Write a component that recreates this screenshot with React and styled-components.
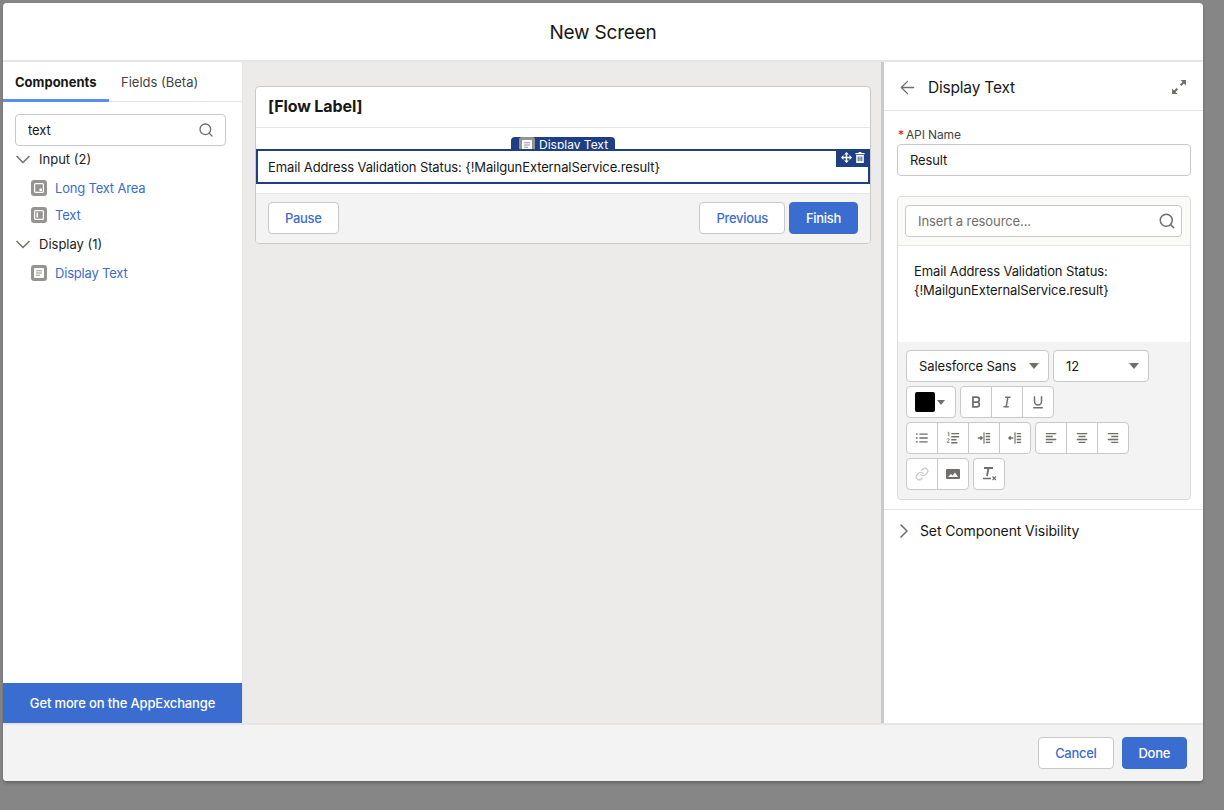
import React from 'react'
import styled, { createGlobalStyle } from 'styled-components'
import { ArrowLeft, Link, Search } from 'lucide-react'

const GlobalStyle = createGlobalStyle`
  html, body {
    margin: 0;
    height: 100%;
    overflow: hidden;
    background: #868686;
  }
  * { box-sizing: border-box; }
  body {
    font-family: Inter, "Liberation Sans", sans-serif;
    font-size: 13px;
    letter-spacing: -0.11px;
    color: #181818;
  }
`

const Page = styled.div`
  width: 1224px;
  height: 810px;
  padding: 3px 21px 29px 3px;
`

const Modal = styled.div`
  height: 778px;
  display: flex;
  flex-direction: column;
  background: #fff;
  border-radius: 4px;
  box-shadow: 0 2px 3px rgba(0, 0, 0, 0.25);
  overflow: hidden;
`

const ModalHeader = styled.header`
  height: 59px;
  flex: none;
  display: flex;
  align-items: center;
  justify-content: center;
  border-bottom: 2px solid #e5e5e5;
  font-size: 19px;
  letter-spacing: -0.2px;
  padding-top: 1px;
`

const ModalBody = styled.div`
  flex: 1;
  min-height: 0;
  display: flex;
`

const ModalFooter = styled.footer`
  height: 58px;
  flex: none;
  display: flex;
  align-items: center;
  justify-content: flex-end;
  gap: 8px;
  padding: 0 16px;
  background: #f3f3f3;
  border-top: 2px solid #e5e5e5;
`

const Button = styled.button`
  height: 32px;
  padding: 0 16px;
  border-radius: 4px;
  font: 500 13px Inter, "Liberation Sans", sans-serif;
  letter-spacing: -0.3px;
  border: 1px solid ${p => (p.$brand ? '#3b6dd0' : '#c9c9c9')};
  background: ${p => (p.$brand ? '#3b6dd0' : '#fff')};
  color: ${p => (p.$brand ? '#fff' : '#3b6dd0')};
`

const Sidebar = styled.aside`
  width: 240px;
  flex: none;
  display: flex;
  flex-direction: column;
  border-right: 1px solid #e5e5e5;
`

const Tabs = styled.div`
  height: 40px;
  flex: none;
  display: flex;
  border-bottom: 1px solid #e5e5e5;
`

const Tab = styled.div`
  height: 40px;
  display: flex;
  align-items: center;
  padding: 2px 12px 0;
  letter-spacing: 0;
  font-weight: ${p => (p.$active ? 700 : 400)};
  color: ${p => (p.$active ? '#181818' : '#444')};
  border-bottom: 3px solid ${p => (p.$active ? '#5b8def' : 'transparent')};
  ${p => p.$active && 'width: 106px;'}
`

const SidebarContent = styled.div`
  flex: 1;
  padding: 12px 16px 0 12px;
`

const SearchBox = styled.div`
  height: 32px;
  display: flex;
  align-items: center;
  justify-content: space-between;
  padding: 0 ${p => p.$right || 12}px 0 12px;
  background: #fff;
  border: 1px solid #c9c9c9;
  border-radius: 4px;
  color: ${p => (p.$muted ? '#706e6b' : '#181818')};
`

const Group = styled.div`
  height: ${p => (p.$first ? 26 : 31)}px;
  margin-bottom: ${p => (p.$first ? 2 : 0)}px;
  display: flex;
  align-items: center;
  gap: 8px;
  letter-spacing: 0;
  color: #222;
`

const Item = styled.a`
  height: 27px;
  display: flex;
  align-items: center;
  gap: 8px;
  padding-left: 16px;
  letter-spacing: -0.2px;
  color: #3b6dd0;
`

const ItemIcon = styled.span`
  width: 16px;
  height: 16px;
  flex: none;
  display: flex;
  align-items: center;
  justify-content: center;
  background: #969492;
  border-radius: 3px;
`

const ExchangeBar = styled.div`
  height: 40px;
  flex: none;
  display: flex;
  align-items: center;
  justify-content: center;
  background: #3b6dd0;
  color: #fff;
  font-weight: 500;
  letter-spacing: -0.15px;
`

const Canvas = styled.main`
  flex: 1;
  min-width: 0;
  padding: 24px 10px 0 12px;
  background: #ecebea;
`

const Card = styled.section`
  height: 158px;
  display: flex;
  flex-direction: column;
  background: #fff;
  border: 1px solid #c9c9c9;
  border-radius: 4px;
  overflow: hidden;
`

const CardTitle = styled.h2`
  height: 41px;
  flex: none;
  margin: 0;
  display: flex;
  align-items: center;
  padding: 0 12px 2px;
  font-size: 16px;
  font-weight: 700;
  border-bottom: 1px solid #e5e5e5;
`

const CardBody = styled.div`
  height: 66px;
  flex: none;
  padding-top: 21px;
  border-bottom: 1px solid #e5e5e5;
`

const Selected = styled.div`
  position: relative;
  height: 35px;
  display: flex;
  align-items: center;
  padding: 0 10px;
  border: 2px solid #1e3f84;
`

const SelectedTab = styled.div`
  position: absolute;
  top: -14px;
  left: 253px;
  width: 104px;
  height: 12px;
  overflow: hidden;
  display: flex;
  align-items: flex-start;
  gap: 4px;
  padding-left: 8px;
  background: #1e3f84;
  border-radius: 4px 4px 0 0;
  color: #fff;
  font-size: 12px;
  letter-spacing: 0;
  line-height: 15px;
`

const SelectedActions = styled.div`
  position: absolute;
  top: -2px;
  right: -2px;
  width: 34px;
  height: 18px;
  display: flex;
  align-items: center;
  justify-content: center;
  gap: 3px;
  padding-bottom: 1px;
  background: #1e3f84;
`

const CardFooter = styled.div`
  flex: 1;
  display: flex;
  align-items: center;
  padding: 0 12px 1px;
  gap: 4px;
  background: #f3f3f3;
`

const Spacer = styled.div`
  flex: 1;
`

const Panel = styled.aside`
  width: 322px;
  flex: none;
  display: flex;
  flex-direction: column;
  background: #fff;
  border-left: 3px solid #c9c9c9;
`

const PanelHeader = styled.div`
  height: 49px;
  flex: none;
  display: flex;
  align-items: center;
  gap: 10px;
  padding: 2px 17px 0 13px;
  border-bottom: 1px solid #e5e5e5;
  font-size: 15.5px;
  letter-spacing: -0.2px;
  svg { color: #706e6b; flex: none; }
`

const ExpandButton = styled.span`
  margin-left: auto;
  display: flex;
`

const PanelBody = styled.div`
  padding: 16px 12px 0 13px;
`

const FieldLabel = styled.label`
  display: block;
  height: 17px;
  padding-left: 1px;
  font-size: 12px;
  line-height: 15px;
  color: #444;
`

const Required = styled.span`
  color: #ea001e;
  margin-right: 2px;
`

const Editor = styled.div`
  margin-top: 20px;
  height: 304px;
  background: #f3f3f3;
  border: 1px solid #dddbda;
  border-radius: 4px;
  overflow: hidden;
`

const EditorSearch = styled.div`
  height: 48px;
  padding: 8px 8px 0 7px;
  background: #fafaf9;
`

const EditorText = styled.div`
  height: 97px;
  padding: 16px 16px 0;
  background: #fff;
  border-top: 1px solid #e5e5e5;
  line-height: 19px;
`

const Toolbar = styled.div`
  padding: 8px 8px 0;
  display: flex;
  flex-direction: column;
  gap: 4px;
`

const ToolRow = styled.div`
  display: flex;
  gap: 4px;
`

const SelectBox = styled.div`
  width: ${p => p.$width}px;
  height: 32px;
  display: flex;
  align-items: center;
  justify-content: space-between;
  padding: 0 9px 0 12px;
  background: #fff;
  border: 1px solid #c9c9c9;
  border-radius: 4px;
`

const Caret = styled.span`
  width: 0;
  height: 0;
  border-left: 5px solid transparent;
  border-right: 5px solid transparent;
  border-top: 6px solid #706e6b;
`

const ColorButton = styled.div`
  width: 50px;
  height: 32px;
  display: flex;
  align-items: center;
  gap: 2px;
  padding-left: 8px;
  background: #fff;
  border: 1px solid #c9c9c9;
  border-radius: 4px;
`

const Swatch = styled.span`
  width: 20px;
  height: 20px;
  background: #000;
  border-radius: 2px;
`

const SmallCaret = styled(Caret)`
  border-left-width: 4px;
  border-right-width: 4px;
  border-top-width: 5px;
`

const ButtonGroup = styled.div`
  display: flex;
  height: 32px;
  background: #fff;
  border: 1px solid #c9c9c9;
  border-radius: 4px;
`

const ToolButton = styled.div`
  width: 31px;
  display: flex;
  align-items: center;
  justify-content: center;
  color: #706e6b;
  &:first-child { width: 30px; }
  & + & { border-left: 1px solid #c9c9c9; }
`

const VisibilityRow = styled.div`
  height: 44px;
  margin-top: 9px;
  display: flex;
  align-items: center;
  gap: 8px;
  padding: 0 0 2px 12px;
  border-top: 1px solid #e5e5e5;
  font-size: 14px;
  letter-spacing: -0.12px;
`

const Glyph = ({ size = 14, children, ...rest }) => (
  <svg width={size} height={size} viewBox="0 0 16 16" fill="none" stroke="currentColor" strokeWidth="1.3" {...rest}>
    {children}
  </svg>
)

const TreeChevron = () => (
  <svg width="16" height="16" viewBox="0 0 16 16" fill="none" stroke="#706e6b" strokeWidth="1.5">
    <path d="M1.500 5l6.500 6.500L14.500 5" />
  </svg>
)

const SideChevron = () => (
  <svg width="16" height="16" viewBox="0 0 16 16" fill="none" stroke="#706e6b" strokeWidth="1.5">
    <path d="M4.500 1.500L11 8l-6.500 6.500" />
  </svg>
)

const LongTextGlyph = () => (
  <svg width="10" height="10" viewBox="0 0 10 10">
    <rect x="0.6" y="0.6" width="8.8" height="8.8" rx="1" fill="none" stroke="#fff" strokeWidth="1.2" />
    <rect x="5.5" y="5.5" width="2.5" height="2.5" fill="#fff" />
  </svg>
)

const TextGlyph = () => (
  <svg width="10" height="10" viewBox="0 0 10 10">
    <rect x="0.6" y="0.6" width="8.8" height="8.8" rx="1" fill="none" stroke="#fff" strokeWidth="1.2" />
    <rect x="2.5" y="2.5" width="1.6" height="5" fill="#fff" />
  </svg>
)

const DisplayGlyph = () => (
  <svg width="10" height="10" viewBox="0 0 10 10">
    <rect width="10" height="10" rx="1" fill="#fff" />
    <path d="M2 2.800h6M2 5h6M2 7.200h4" stroke="#969492" strokeWidth="1" />
  </svg>
)

const MoveGlyph = () => (
  <svg width="11" height="11" viewBox="0 0 12 12" fill="#fff">
    <path d="M6 0l2.600 2.700H6.800v2.500h2.500V3.400L12 6 9.300 8.600V6.800H6.800v2.500h1.800L6 12 3.400 9.300h1.800V6.800H2.700v1.800L0 6l2.700-2.600v1.800h2.500V2.700H3.400z" />
  </svg>
)

const TrashGlyph = () => (
  <svg width="10" height="11" viewBox="0 0 11 12" fill="#fff">
    <path d="M4 0h3v1h3.500v1.400H.5V1H4z" />
    <path fillRule="evenodd" d="M1.300 3.200h8.400V12H1.300zM3 5v5h1V5zm2 0v5h1V5zm2 0v5h1V5z" />
  </svg>
)

const ExpandGlyph = () => (
  <svg width="14" height="14" viewBox="0 0 14 14" fill="#706e6b">
    <path d="M8.500 0H14v5.500l-2-2-2.600 2.600-1.500-1.500L10.500 2z" />
    <path d="M5.500 14H0V8.500l2 2 2.600-2.600 1.500 1.500L3.500 12z" />
  </svg>
)

const ListIcon = () => (
  <Glyph strokeWidth="1.500">
    <path d="M5 3.500h9.500M5 8h9.500M5 12.500h9.500M1 3.500h2M1 8h2M1 12.500h2" />
  </Glyph>
)

const OrderedIcon = () => (
  <Glyph>
    <path d="M6 3h9M6 6.500h9M6 10h6M6 13.500h7" strokeWidth="1.600" />
    <path d="M2 2l1.200-.7V6M1.200 9.500c.4-1 2.600-1 2.600.3 0 1-1.800 1.600-2.600 3.200h2.800" strokeWidth="1" />
  </Glyph>
)

const IndentIcon = ({ flip }) => (
  <Glyph>
    <path d="M8 1.500v13" />
    <path d="M10 3h5M10 6.300h5M10 9.700h5M10 13h5" strokeWidth="1.500" />
    {flip
      ? <path d="M1 8h5M3 6l-2 2 2 2" strokeWidth="1.500" />
      : <path d="M1 8h5M4 6l2 2-2 2" strokeWidth="1.500" />}
  </Glyph>
)

const AlignIcon = ({ d }) => (
  <Glyph strokeWidth="1.700">
    <path d={d} />
  </Glyph>
)

const ImageIcon = () => (
  <svg width="14" height="14" viewBox="0 0 14 14">
    <path fillRule="evenodd" fill="#706e6b" d="M1 2h12a1 1 0 011 1v8a1 1 0 01-1 1H1a1 1 0 01-1-1V3a1 1 0 011-1zm1 8h10L9 5.500 6.500 8.500 5 7z" />
    <circle cx="10.500" cy="4.500" r="1" fill="#706e6b" />
  </svg>
)

const ClearIcon = () => (
  <svg width="16" height="16" viewBox="0 0 16 16" fill="none" stroke="#706e6b">
    <path d="M3 2h9M7.500 2L6 10" strokeWidth="1.800" />
    <path d="M2 12.500h8" strokeWidth="1.400" />
    <path d="M11.500 10.500l3.500 3.500M15 10.500L11.500 14" strokeWidth="1.100" />
  </svg>
)

const App = () => (
  <Page>
    <GlobalStyle />
    <Modal>
      <ModalHeader>New Screen</ModalHeader>
      <ModalBody>
        <Sidebar>
          <Tabs>
            <Tab $active>Components</Tab>
            <Tab>Fields (Beta)</Tab>
          </Tabs>
          <SidebarContent>
            <SearchBox $right={11}>
              text
              <Search size={16} color="#706e6b" strokeWidth={2} />
            </SearchBox>
            <Group $first>
              <TreeChevron />
              Input (2)
            </Group>
            <Item><ItemIcon><LongTextGlyph /></ItemIcon>Long Text Area</Item>
            <Item><ItemIcon><TextGlyph /></ItemIcon>Text</Item>
            <Group>
              <TreeChevron />
              Display (1)
            </Group>
            <Item><ItemIcon><DisplayGlyph /></ItemIcon>Display Text</Item>
          </SidebarContent>
          <ExchangeBar>Get more on the AppExchange</ExchangeBar>
        </Sidebar>

        <Canvas>
          <Card>
            <CardTitle>[Flow Label]</CardTitle>
            <CardBody>
              <Selected>
                <SelectedTab>
                  <ItemIcon><DisplayGlyph /></ItemIcon>
                  Display Text
                </SelectedTab>
                <SelectedActions>
                  <MoveGlyph />
                  <TrashGlyph />
                </SelectedActions>
                Email Address Validation Status: {'{!MailgunExternalService.result}'}
              </Selected>
            </CardBody>
            <CardFooter>
              <Button>Pause</Button>
              <Spacer />
              <Button>Previous</Button>
              <Button $brand>Finish</Button>
            </CardFooter>
          </Card>
        </Canvas>

        <Panel>
          <PanelHeader>
            <ArrowLeft size={21} strokeWidth={1.500} />
            Display Text
            <ExpandButton><ExpandGlyph /></ExpandButton>
          </PanelHeader>
          <PanelBody>
            <FieldLabel><Required>*</Required>API Name</FieldLabel>
            <SearchBox>Result</SearchBox>
            <Editor>
              <EditorSearch>
                <SearchBox $muted $right={5}>
                  Insert a resource...
                  <Search size={18} color="#706e6b" strokeWidth={2} />
                </SearchBox>
              </EditorSearch>
              <EditorText>
                Email Address Validation Status:
                <br />
                {'{!MailgunExternalService.result}'}
              </EditorText>
              <Toolbar>
                <ToolRow>
                  <SelectBox $width={143}>Salesforce Sans<Caret /></SelectBox>
                  <SelectBox $width={96}>12<Caret /></SelectBox>
                </ToolRow>
                <ToolRow>
                  <ColorButton><Swatch /><SmallCaret /></ColorButton>
                  <ButtonGroup>
                    <ToolButton>
                      <Glyph strokeWidth="2"><path d="M4.500 2.500h4.500a2.700 2.700 0 010 5.500H4.500zM4.500 8h5a2.800 2.800 0 010 5.500h-5z" /></Glyph>
                    </ToolButton>
                    <ToolButton>
                      <Glyph strokeWidth="1.700"><path d="M6 2.500h6M4 13.500h6M9 2.500L7 13.500" /></Glyph>
                    </ToolButton>
                    <ToolButton>
                      <Glyph strokeWidth="1.700"><path d="M4 1.500v6a4 4 0 008 0v-6M2.500 14.500h11" /></Glyph>
                    </ToolButton>
                  </ButtonGroup>
                </ToolRow>
                <ToolRow>
                  <ButtonGroup>
                    <ToolButton><ListIcon /></ToolButton>
                    <ToolButton><OrderedIcon /></ToolButton>
                    <ToolButton><IndentIcon /></ToolButton>
                    <ToolButton><IndentIcon flip /></ToolButton>
                  </ButtonGroup>
                  <ButtonGroup>
                    <ToolButton><AlignIcon d="M2 3h12M2 6.300h8M2 9.700h12M2 13h8" /></ToolButton>
                    <ToolButton><AlignIcon d="M2 3h12M4 6.300h8M2 9.700h12M4 13h8" /></ToolButton>
                    <ToolButton><AlignIcon d="M2 3h12M6 6.300h8M2 9.700h12M6 13h8" /></ToolButton>
                  </ButtonGroup>
                </ToolRow>
                <ToolRow>
                  <ButtonGroup>
                    <ToolButton><Link size={14} color="#c9c7c5" strokeWidth={2} /></ToolButton>
                    <ToolButton><ImageIcon /></ToolButton>
                  </ButtonGroup>
                  <ButtonGroup>
                    <ToolButton><ClearIcon /></ToolButton>
                  </ButtonGroup>
                </ToolRow>
              </Toolbar>
            </Editor>
          </PanelBody>
          <VisibilityRow>
            <SideChevron />
            Set Component Visibility
          </VisibilityRow>
        </Panel>
      </ModalBody>
      <ModalFooter>
        <Button>Cancel</Button>
        <Button $brand>Done</Button>
      </ModalFooter>
    </Modal>
  </Page>
)

export default App
